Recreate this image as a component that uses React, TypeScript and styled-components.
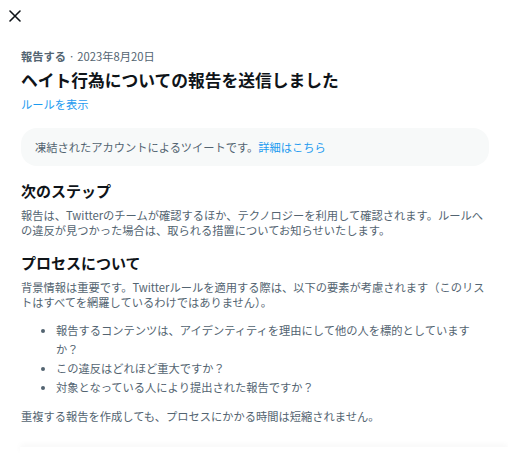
import React from 'react';
import styled, { createGlobalStyle } from 'styled-components';

const GlobalStyle = createGlobalStyle`
    html, body {
        margin: 0;
        padding: 0;
        background: #ffffff;
    }
    body {
        font-family: "Noto Sans CJK JP", "Noto Sans", "Liberation Sans", sans-serif;
        color: #0f1419;
    }
`;

const nextSteps =
    '報告は、Twitterのチームが確認するほか、テクノロジーを利用して確認されます。ルールへの違反が見つかった場合は、取られる措置についてお知らせいたします。';

const processIntro =
    '背景情報は重要です。Twitterルールを適用する際は、以下の要素が考慮されます（このリストはすべてを網羅しているわけではありません）。';

const factors = [
    '報告するコンテンツは、アイデンティティを理由にして他の人を標的としていますか？',
    'この違反はどれほど重大ですか？',
    '対象となっている人により提出された報告ですか？',
];

const App = () => {
    return (
        <Wrapper>
            <GlobalStyle />
            <TopBar>
                <CloseButton aria-label="閉じる">
                    <svg width="12" height="12" viewBox="0 0 12 12">
                        <path d="M1 1 L11 11 M11 1 L1 11" stroke="#0f1419" strokeWidth="1.6" strokeLinecap="round" />
                    </svg>
                </CloseButton>
            </TopBar>
            <Content>
                <Meta>
                    <MetaStrong>報告する</MetaStrong> · 2023年8月20日
                </Meta>
                <Title>ヘイト行為についての報告を送信しました</Title>
                <Link>ルールを表示</Link>
                <Notice>
                    凍結されたアカウントによるツイートです。<Link as="span">詳細はこちら</Link>
                </Notice>
                <Heading>次のステップ</Heading>
                <Paragraph>{nextSteps}</Paragraph>
                <Heading>プロセスについて</Heading>
                <Paragraph>{processIntro}</Paragraph>
                <List>
                    {factors.map((item) => (
                        <li key={item}>{item}</li>
                    ))}
                </List>
                <Paragraph $gap={12}>重複する報告を作成しても、プロセスにかかる時間は短縮されません。</Paragraph>
            </Content>
            <Footer />
        </Wrapper>
    );
};

export default App;

const Wrapper = styled.div`
    width: 508px;
    height: 453px;
    overflow: hidden;
    display: flex;
    flex-direction: column;
`;

const TopBar = styled.div`
    height: 31px;
    display: flex;
    align-items: center;
    padding-left: 9px;
`;

const CloseButton = styled.button`
    border: none;
    background: none;
    padding: 0;
    width: 12px;
    height: 12px;
    display: flex;
    cursor: pointer;
`;

const Content = styled.div`
    padding: 17.5px 19px 0 21px;
    display: flex;
    flex-direction: column;
`;

const Meta = styled.div`
    font-size: 11.25px;
    line-height: 15px;
    color: #536471;
`;

const MetaStrong = styled.span`
    font-weight: 700;
`;

const Title = styled.h1`
    margin: 5.5px 0 0;
    font-size: 16.75px;
    line-height: 22px;
    font-weight: 700;
    color: #0f1419;
`;

const Link = styled.a`
    margin-top: 5.5px;
    font-size: 11.25px;
    line-height: 15px;
    color: #1d9bf0;
    cursor: pointer;
`;

const Notice = styled.div`
    margin-top: 16.5px;
    padding: 11.5px 14px;
    background: #f7f9f9;
    border-radius: 16px;
    font-size: 11.25px;
    line-height: 15px;
    color: #536471;
`;

const Heading = styled.h2`
    margin: 14.5px 0 0;
    font-size: 15px;
    line-height: 20px;
    font-weight: 700;
    color: #0f1419;
`;

const Paragraph = styled.p<{ $gap?: number }>`
    margin: ${(p) => p.$gap ?? 7}px 0 0;
    font-size: 11.25px;
    line-height: 15.25px;
    color: #536471;
`;

const List = styled.ul`
    margin: 11px 0 0;
    padding-left: 35px;
    font-size: 11.25px;
    line-height: 19px;
    color: #536471;
`;

const Footer = styled.div`
    margin: auto 0 0 20px;
    height: 6px;
    background: #ffffff;
    box-shadow: 0 -2px 6px rgba(0, 0, 0, 0.04);
`;
